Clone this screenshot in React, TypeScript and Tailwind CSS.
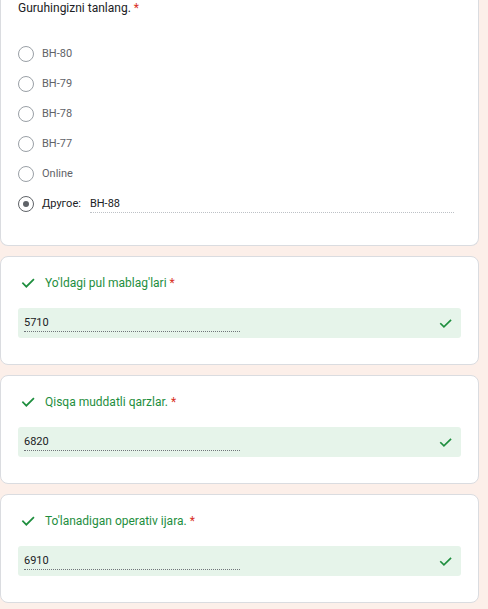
import React from "react";

const Check = ({ className }: { className?: string }) => (
  <svg viewBox="0 0 24 24" className={className} fill="none" stroke="currentColor" strokeWidth={2.6} strokeLinecap="square">
    <path d="M4.5 12.5l5 5L20 7" />
  </svg>
);

const Radio = ({ checked }: { checked?: boolean }) => (
  <div
    className={`w-4 h-4 rounded-full border-[1.5px] flex items-center justify-center shrink-0 ${
      checked ? "border-[#5f6368]" : "border-[#9aa0a6]"
    }`}
  >
    {checked && <div className="w-[6px] h-[6px] rounded-full bg-[#5f6368]" />}
  </div>
);

const options = ["BH-80", "BH-79", "BH-78", "BH-77", "Online"];

const AnswerCard = ({ title, value }: { title: string; value: string }) => (
  <div className="w-[479px] bg-white border border-[#dadce0] rounded-lg px-[17px] pt-[17px] pb-[26px]">
    <div className="flex items-center h-[18px]">
      <Check className="w-[16px] h-[16px] text-[#1e8e3e] ml-[2px]" />
      <span className="ml-[9px] text-[12px] text-[#1e8e3e]">
        {title} <span className="text-[#d93025]">*</span>
      </span>
    </div>
    <div className="mt-[16px] h-[30px] bg-[#e6f4ea] rounded-[3px] flex items-center pl-[6px] pr-[8px]">
      <div className="w-[216px] h-[18px] border-b border-dotted border-[#70757a] text-[11px] text-[#202124] leading-[18px]">
        {value}
      </div>
      <div className="flex-1" />
      <Check className="w-[15px] h-[15px] text-[#1e8e3e]" />
    </div>
  </div>
);

export default function App() {
  return (
    <div
      className="w-[488px] h-[609px] overflow-hidden bg-[#fcefe9] flex flex-col gap-[10px]"
      style={{ fontFamily: "Roboto, 'Liberation Sans', sans-serif" }}
    >
      <div className="w-[479px] bg-white border border-t-0 border-[#dadce0] rounded-b-lg pl-[17px] pr-[24px] pb-[26px]">
        <div className="h-[16px] leading-[16px] text-[12px] text-[#202124]">
          Guruhingizni tanlang. <span className="text-[#d93025]">*</span>
        </div>
        <div className="mt-[23px] flex flex-col">
          {options.map((o) => (
            <div key={o} className="h-[30px] flex items-center">
              <Radio />
              <span className="ml-[8px] text-[11px] text-[#5f6368]">{o}</span>
            </div>
          ))}
          <div className="h-[30px] flex items-center">
            <Radio checked />
            <span className="ml-[8px] text-[11px] text-[#202124]">Другое:</span>
            <div className="ml-[9px] flex-1 h-[18px] leading-[18px] border-b border-dotted border-[#bdc1c6] text-[11px] text-[#202124]">
              BH-88
            </div>
          </div>
        </div>
      </div>
      <AnswerCard title="Yo'ldagi pul mablag'lari" value="5710" />
      <AnswerCard title="Qisqa muddatli qarzlar." value="6820" />
      <AnswerCard title="To'lanadigan operativ ijara." value="6910" />
    </div>
  );
}
